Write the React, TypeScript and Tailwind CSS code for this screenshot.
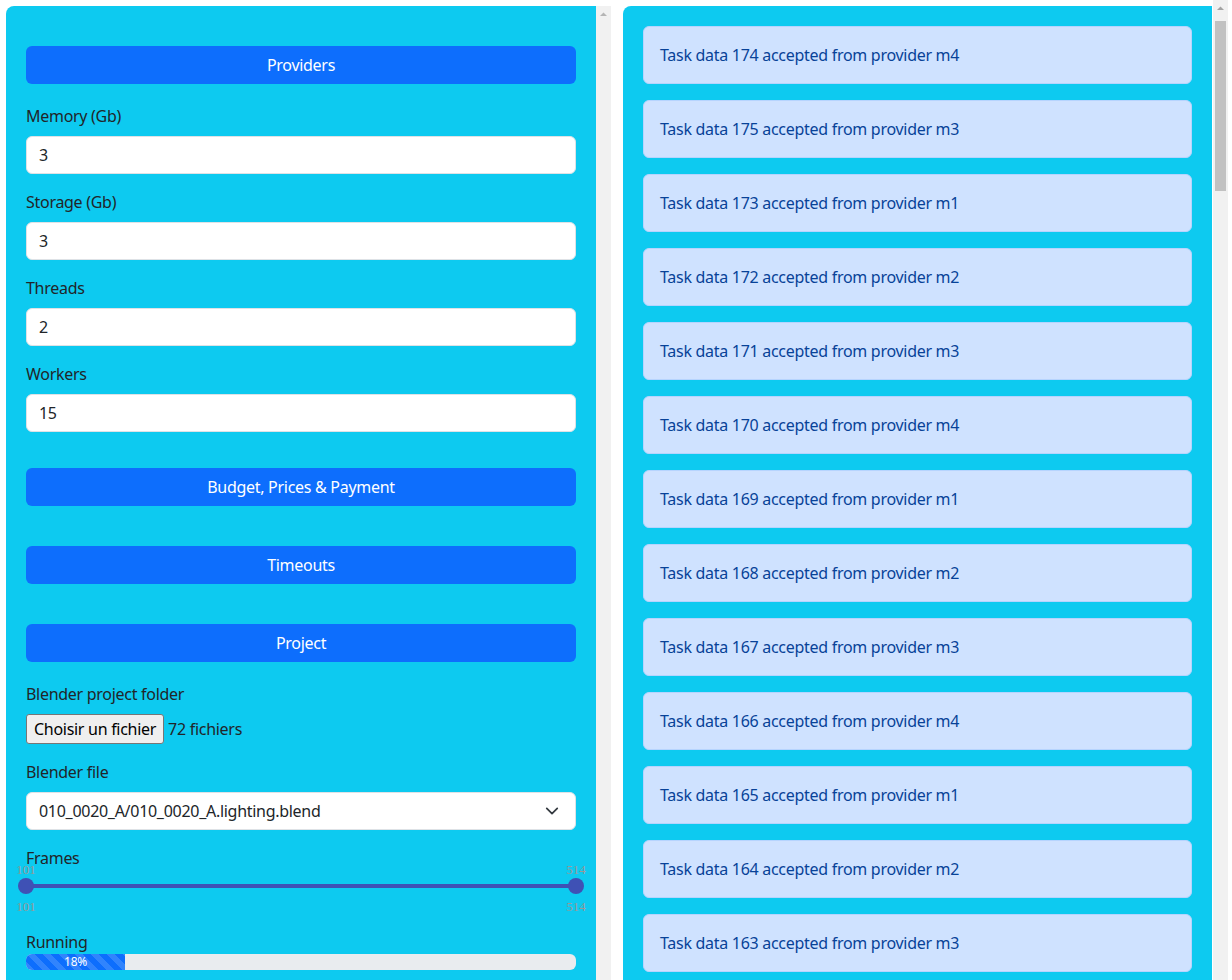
import React from 'react';

const tasks: { n: number; m: number }[] = [
  { n: 174, m: 4 },
  { n: 175, m: 3 },
  ...Array.from({ length: 73 }, (_, i) => ({ n: 173 - i, m: (i % 4) + 1 })),
];

function SectionButton({ label }: { label: string }) {
  return (
    <button className="mt-5 h-[38px] w-full rounded-md bg-[#0d6efd] text-base text-white">
      {label}
    </button>
  );
}

function Field({ label, value }: { label: string; value: string }) {
  return (
    <div className="mb-4">
      <div className="mb-2 leading-6">{label}</div>
      <div className="flex h-[38px] items-center rounded-md border border-[#dee2e6] bg-white px-3">{value}</div>
    </div>
  );
}

function RangeSlider() {
  return (
    <div className="relative mb-4 h-[44px] font-['Liberation_Serif',serif] text-[13px] leading-[15px] tracking-normal text-[#999]">
      <span className="absolute -top-2 left-0 -translate-x-1/2">101</span>
      <span className="absolute -top-2 left-full -translate-x-1/2">514</span>
      <div className="absolute inset-x-0 top-[14px] h-1 bg-[#3f51b5]" />
      <div className="absolute top-2 left-0 size-4 -translate-x-1/2 rounded-full bg-[#3f51b5]" />
      <div className="absolute top-2 left-full size-4 -translate-x-1/2 rounded-full bg-[#3f51b5]" />
      <span className="absolute top-[29px] left-0 -translate-x-1/2">101</span>
      <span className="absolute top-[29px] left-full -translate-x-1/2">514</span>
    </div>
  );
}

function ScrollTrack({ thumb }: { thumb?: boolean }) {
  return (
    <div className="flex w-[15px] shrink-0 flex-col items-center bg-[#f1f1f1]">
      <svg width="15" height="15" viewBox="0 0 15 15" className="shrink-0">
        <path d="M4 10h7L7.5 6.5z" fill={thumb ? '#a3a3a3' : '#b5b5b5'} />
      </svg>
      {thumb && <div className="mt-[6px] h-[170px] w-[11px] bg-[#c1c1c1]" />}
    </div>
  );
}

export default function App() {
  return (
    <div className="flex h-screen overflow-hidden bg-white font-['Noto_Sans',sans-serif] text-base tracking-[-0.018em] text-[#212529]">
      <div className="flex flex-1 items-start gap-3 pt-[6px] pl-[6px]">
        {/* Settings column */}
        <div className="flex h-[1000px] w-[605px] shrink-0">
          <div className="flex-1 rounded-tl-lg bg-[#0dcaf0] p-5">
            <SectionButton label="Providers" />
            <div className="mt-5">
              <Field label="Memory (Gb)" value="3" />
              <Field label="Storage (Gb)" value="3" />
              <Field label="Threads" value="2" />
              <Field label="Workers" value="15" />
            </div>

            <SectionButton label="Budget, Prices & Payment" />
            <div className="h-5" />
            <SectionButton label="Timeouts" />
            <div className="h-5" />
            <SectionButton label="Project" />

            <div className="mt-5">
              <div className="mb-2 leading-6">Blender project folder</div>
              <div className="mb-4 flex h-[30px] items-center">
                <span className="flex h-[30px] items-center rounded-[3px] border border-[#767676] bg-[#efefef] px-[7px] text-black">
                  Choisir un fichier
                </span>
                <span className="ml-1">72 fichiers</span>
              </div>

              <div className="mb-2 leading-6">Blender file</div>
              <div className="mb-4 flex h-[38px] items-center justify-between rounded-md border border-[#dee2e6] bg-white pr-4 pl-3">
                <span>010_0020_A/010_0020_A.lighting.blend</span>
                <svg width="14" height="14" viewBox="0 0 16 16" fill="none" stroke="#343a40" strokeWidth="2" strokeLinecap="round" strokeLinejoin="round">
                  <path d="M2 5l6 6 6-6" />
                </svg>
              </div>

              <div className="leading-6">Frames</div>
              <RangeSlider />

              <div className="leading-6">Running</div>
              <div className="flex h-4 overflow-hidden rounded-md bg-[#e9ecef]">
                <div className="flex w-[18%] items-center justify-center bg-[#0d6efd] bg-[linear-gradient(45deg,rgba(255,255,255,.15)_25%,transparent_25%,transparent_50%,rgba(255,255,255,.15)_50%,rgba(255,255,255,.15)_75%,transparent_75%,transparent)] bg-[length:16px_16px] text-[12px] leading-none text-white">
                  18%
                </div>
              </div>
            </div>
          </div>
          <ScrollTrack />
        </div>

        {/* Task log */}
        <div className="flex w-[589px] shrink-0 flex-col gap-4 rounded-tl-lg bg-[#0dcaf0] p-5">
          {tasks.map((t) => (
            <div key={t.n} className="rounded-md border border-[#b6d4fe] bg-[#cfe2ff] p-4 leading-6 text-[#084298]">
              Task data {t.n} accepted from provider m{t.m}
            </div>
          ))}
        </div>
      </div>

      {/* page scrollbar */}
      <div className="ml-px flex">
        <ScrollTrack thumb />
        <div className="w-1" />
      </div>
    </div>
  );
}
